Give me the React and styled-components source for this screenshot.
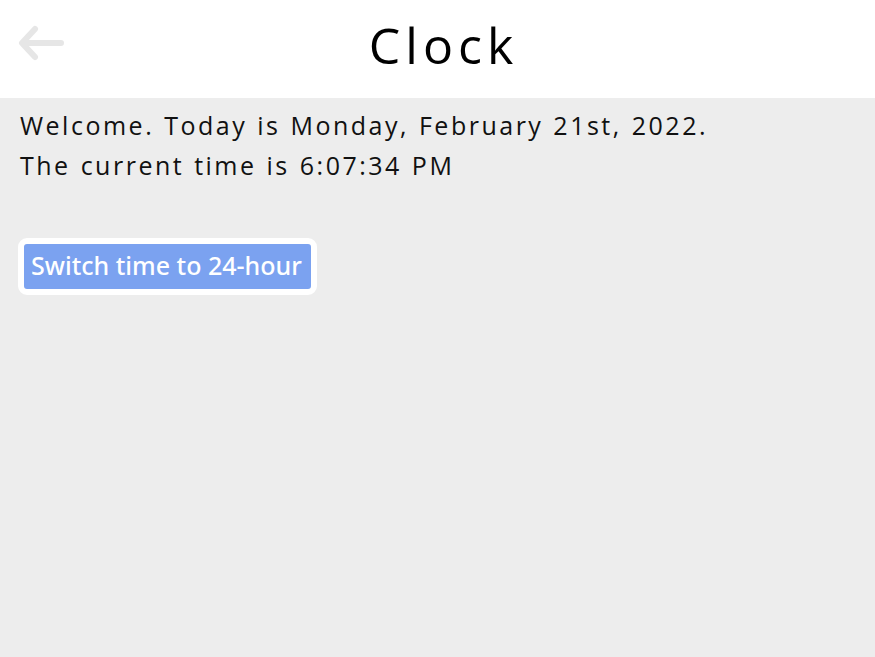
import React from "react";
import styled, { createGlobalStyle } from "styled-components";

const Global = createGlobalStyle`
  html, body { margin: 0; padding: 0; height: 100%; }
  body { background: #ededed; font-family: "Open Sans", "Noto Sans", sans-serif; }
  #root { min-height: 100vh; display: flex; flex-direction: column; }
`;

const Page = styled.div`
  display: flex;
  flex-direction: column;
  min-height: 100vh;
  background: #ededed;
`;

const Header = styled.header`
  height: 98px;
  background: #ffffff;
  display: grid;
  grid-template-columns: 92px 1fr 80px;
  align-items: center;
`;

const BackButton = styled.button`
  border: none;
  background: none;
  padding: 0 0 0 17px;
  margin-top: -13px;
  display: flex;
  align-items: center;
  cursor: pointer;
`;

const Title = styled.h1`
  margin: 0;
  text-align: center;
  font-family: "Open Sans", sans-serif;
  font-weight: 400;
  font-size: 50px;
  letter-spacing: 5px;
  color: #000;
  margin-top: -8px;
`;

const Content = styled.main`
  flex: 1;
  padding: 7px 20px;
`;

const Line = styled.p`
  margin: 0;
  font-family: "Open Sans", sans-serif;
  font-size: 25px;
  line-height: 40px;
  letter-spacing: 2.5px;
  word-spacing: 1px;
  color: #111;
`;

const ToggleButton = styled.button`
  margin-top: 53px;
  margin-left: -2px;
  border: 6px solid #ffffff;
  border-radius: 9px;
  background: #7ba2f0;
  color: #ffffff;
  font-family: "Noto Sans", "Open Sans", sans-serif;
  font-size: 25px;
  font-weight: 500;
  padding: 3px 9px 6px 7px;
  line-height: 36px;
  cursor: pointer;
`;

export default function App() {
  return (
    <Page>
      <Global />
      <Header>
        <BackButton aria-label="Back">
          <svg width="48" height="38" viewBox="0 0 48 38" fill="none">
            <path d="M44 19H6M18 5L5 19l13 14" stroke="#e6e6e6" strokeWidth="6" strokeLinecap="round" strokeLinejoin="round" />
          </svg>
        </BackButton>
        <Title>Clock</Title>
        <div />
      </Header>
      <Content>
        <Line>Welcome. Today is Monday, February 21st, 2022.</Line>
        <Line>The current time is 6:07:34 PM</Line>
        <ToggleButton>Switch time to 24-hour</ToggleButton>
      </Content>
    </Page>
  );
}
